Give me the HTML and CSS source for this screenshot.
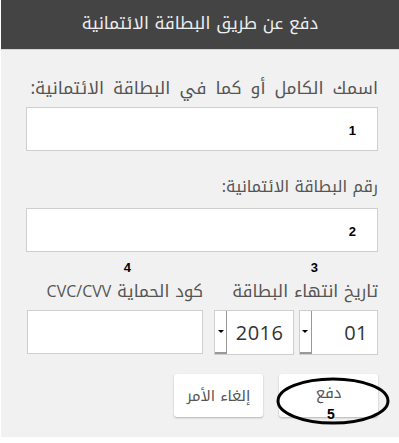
FILE: index.html
```html
<!DOCTYPE html>
<html lang="ar" dir="rtl">
<head>
<meta charset="utf-8">
<link rel="stylesheet" href="styles.css">
</head>
<body>
<div class="panel">
  <div class="header">دفع عن طريق البطاقة الائتمانية</div>
  <div class="form">
    <div class="label l1">اسمك الكامل أو كما في البطاقة الائتمانية:</div>
    <div class="field"><span class="mark">1</span></div>
    <div class="label l2">رقم البطاقة الائتمانية:</div>
    <div class="field"><span class="mark">2</span></div>
    <div class="row">
      <div class="col exp">
        <div class="num n3">3</div>
        <div class="label">تاريخ انتهاء البطاقة</div>
        <div class="selects">
          <div class="select"><span class="val">01</span><span class="arrow"></span></div>
          <div class="select"><span class="val">2016</span><span class="arrow"></span></div>
        </div>
      </div>
      <div class="col cvc">
        <div class="num n4">4</div>
        <div class="label">كود الحماية <span class="latin">CVC/CVV</span></div>
        <div class="field small"></div>
      </div>
    </div>
    <div class="buttons">
      <div class="btn pay">دفع</div>
      <div class="btn cancel">إلغاء الأمر</div>
    </div>
  </div>
  <svg class="ellipse" width="120" height="52" viewBox="0 0 120 52">
    <ellipse cx="58" cy="25" rx="55" ry="22" fill="none" stroke="#000" stroke-width="3"/>
  </svg>
  <div class="n5">5</div>
</div>
</body>
</html>
```
FILE: styles.css
```css
html, body { margin: 0; padding: 0; background: #fff; }
body { font-family: "Noto Kufi Arabic", "Open Sans", sans-serif; }
.panel {
  position: relative;
  width: 398px;
  height: 437px;
  background: #f1f1f1;
  margin-left: 1px;
  box-sizing: border-box;
}
.header {
  height: 49px;
  background: #444444;
  border-bottom: 1px solid #d6d6d6;
  color: #efefef;
  font-size: 17px;
  text-align: center;
  line-height: 46px;
}
.form {
  padding: 28px 21px 0 25px;
  display: flex;
  flex-direction: column;
}
.label {
  color: #555;
  font-size: 17px;
  line-height: 22px;
  height: 22px;
  white-space: nowrap;
}
.l1 { font-size: 17.5px; word-spacing: 3px; margin-bottom: 7px; }
.l2 { font-size: 16px; margin-top: 25px; margin-bottom: 10px; }
.latin { font-family: "Open Sans", sans-serif; font-size: 16px; }
.field {
  height: 44px;
  background: #fff;
  border: 1px solid #cfcfcf;
  box-sizing: border-box;
  display: flex;
  align-items: center;
}
.mark {
  font-family: "Liberation Sans", Arial, sans-serif;
  font-weight: bold;
  font-size: 13px;
  color: #000;
  margin-right: 21px;
  margin-top: 2px;
}
.row {
  display: flex;
  gap: 11px;
  margin-top: 8px;
}
.col { display: flex; flex-direction: column; }
.exp { width: 164px; }
.cvc { width: 176px; }
.num {
  font-family: "Liberation Sans", Arial, sans-serif;
  font-weight: bold;
  font-size: 13px;
  color: #000;
  height: 16px;
  line-height: 16px;
  margin-bottom: 4px;
}
.n3 { margin-right: 60px; }
.n4 { margin-right: 72px; }
.col .label { margin-bottom: 8px; }
.selects { display: flex; gap: 5px; }
.select {
  width: 80px;
  height: 45px;
  background: #fff;
  border: 1px solid #cfcfcf;
  box-sizing: border-box;
  display: flex;
  align-items: center;
}
.val {
  flex: 1;
  font-family: "Open Sans", sans-serif;
  font-size: 20px;
  letter-spacing: 0.5px;
  color: #333;
  text-align: right;
  padding-right: 9px;
}
.arrow {
  width: 12px;
  height: 43px;
  border-right: 1px solid #999;
  border-bottom: 2px solid #999;
  box-sizing: border-box;
  display: flex;
  align-items: center;
  justify-content: center;
  background: #fff;
}
.arrow::before {
  content: "";
  border-left: 3px solid transparent;
  border-right: 3px solid transparent;
  border-top: 3px solid #000;
}
.small { width: 176px; height: 44px; }
.buttons {
  display: flex;
  gap: 16px;
  margin-top: 19px;
}
.btn {
  height: 43px;
  background: #fff;
  border-radius: 3px;
  box-shadow: 0 1px 2px rgba(0,0,0,0.25);
  color: #555;
  font-size: 15px;
  display: flex;
  align-items: center;
  justify-content: center;
  line-height: 20px;
}
.pay { width: 99px; padding-bottom: 6px; box-sizing: border-box; }
.cancel { width: 89px; }
.ellipse {
  position: absolute;
  left: 274px;
  top: 376px;
}
.n5 {
  position: absolute;
  left: 326px;
  top: 406px;
  font-family: "Liberation Sans", Arial, sans-serif;
  font-weight: bold;
  font-size: 14px;
  color: #000;
}
```
